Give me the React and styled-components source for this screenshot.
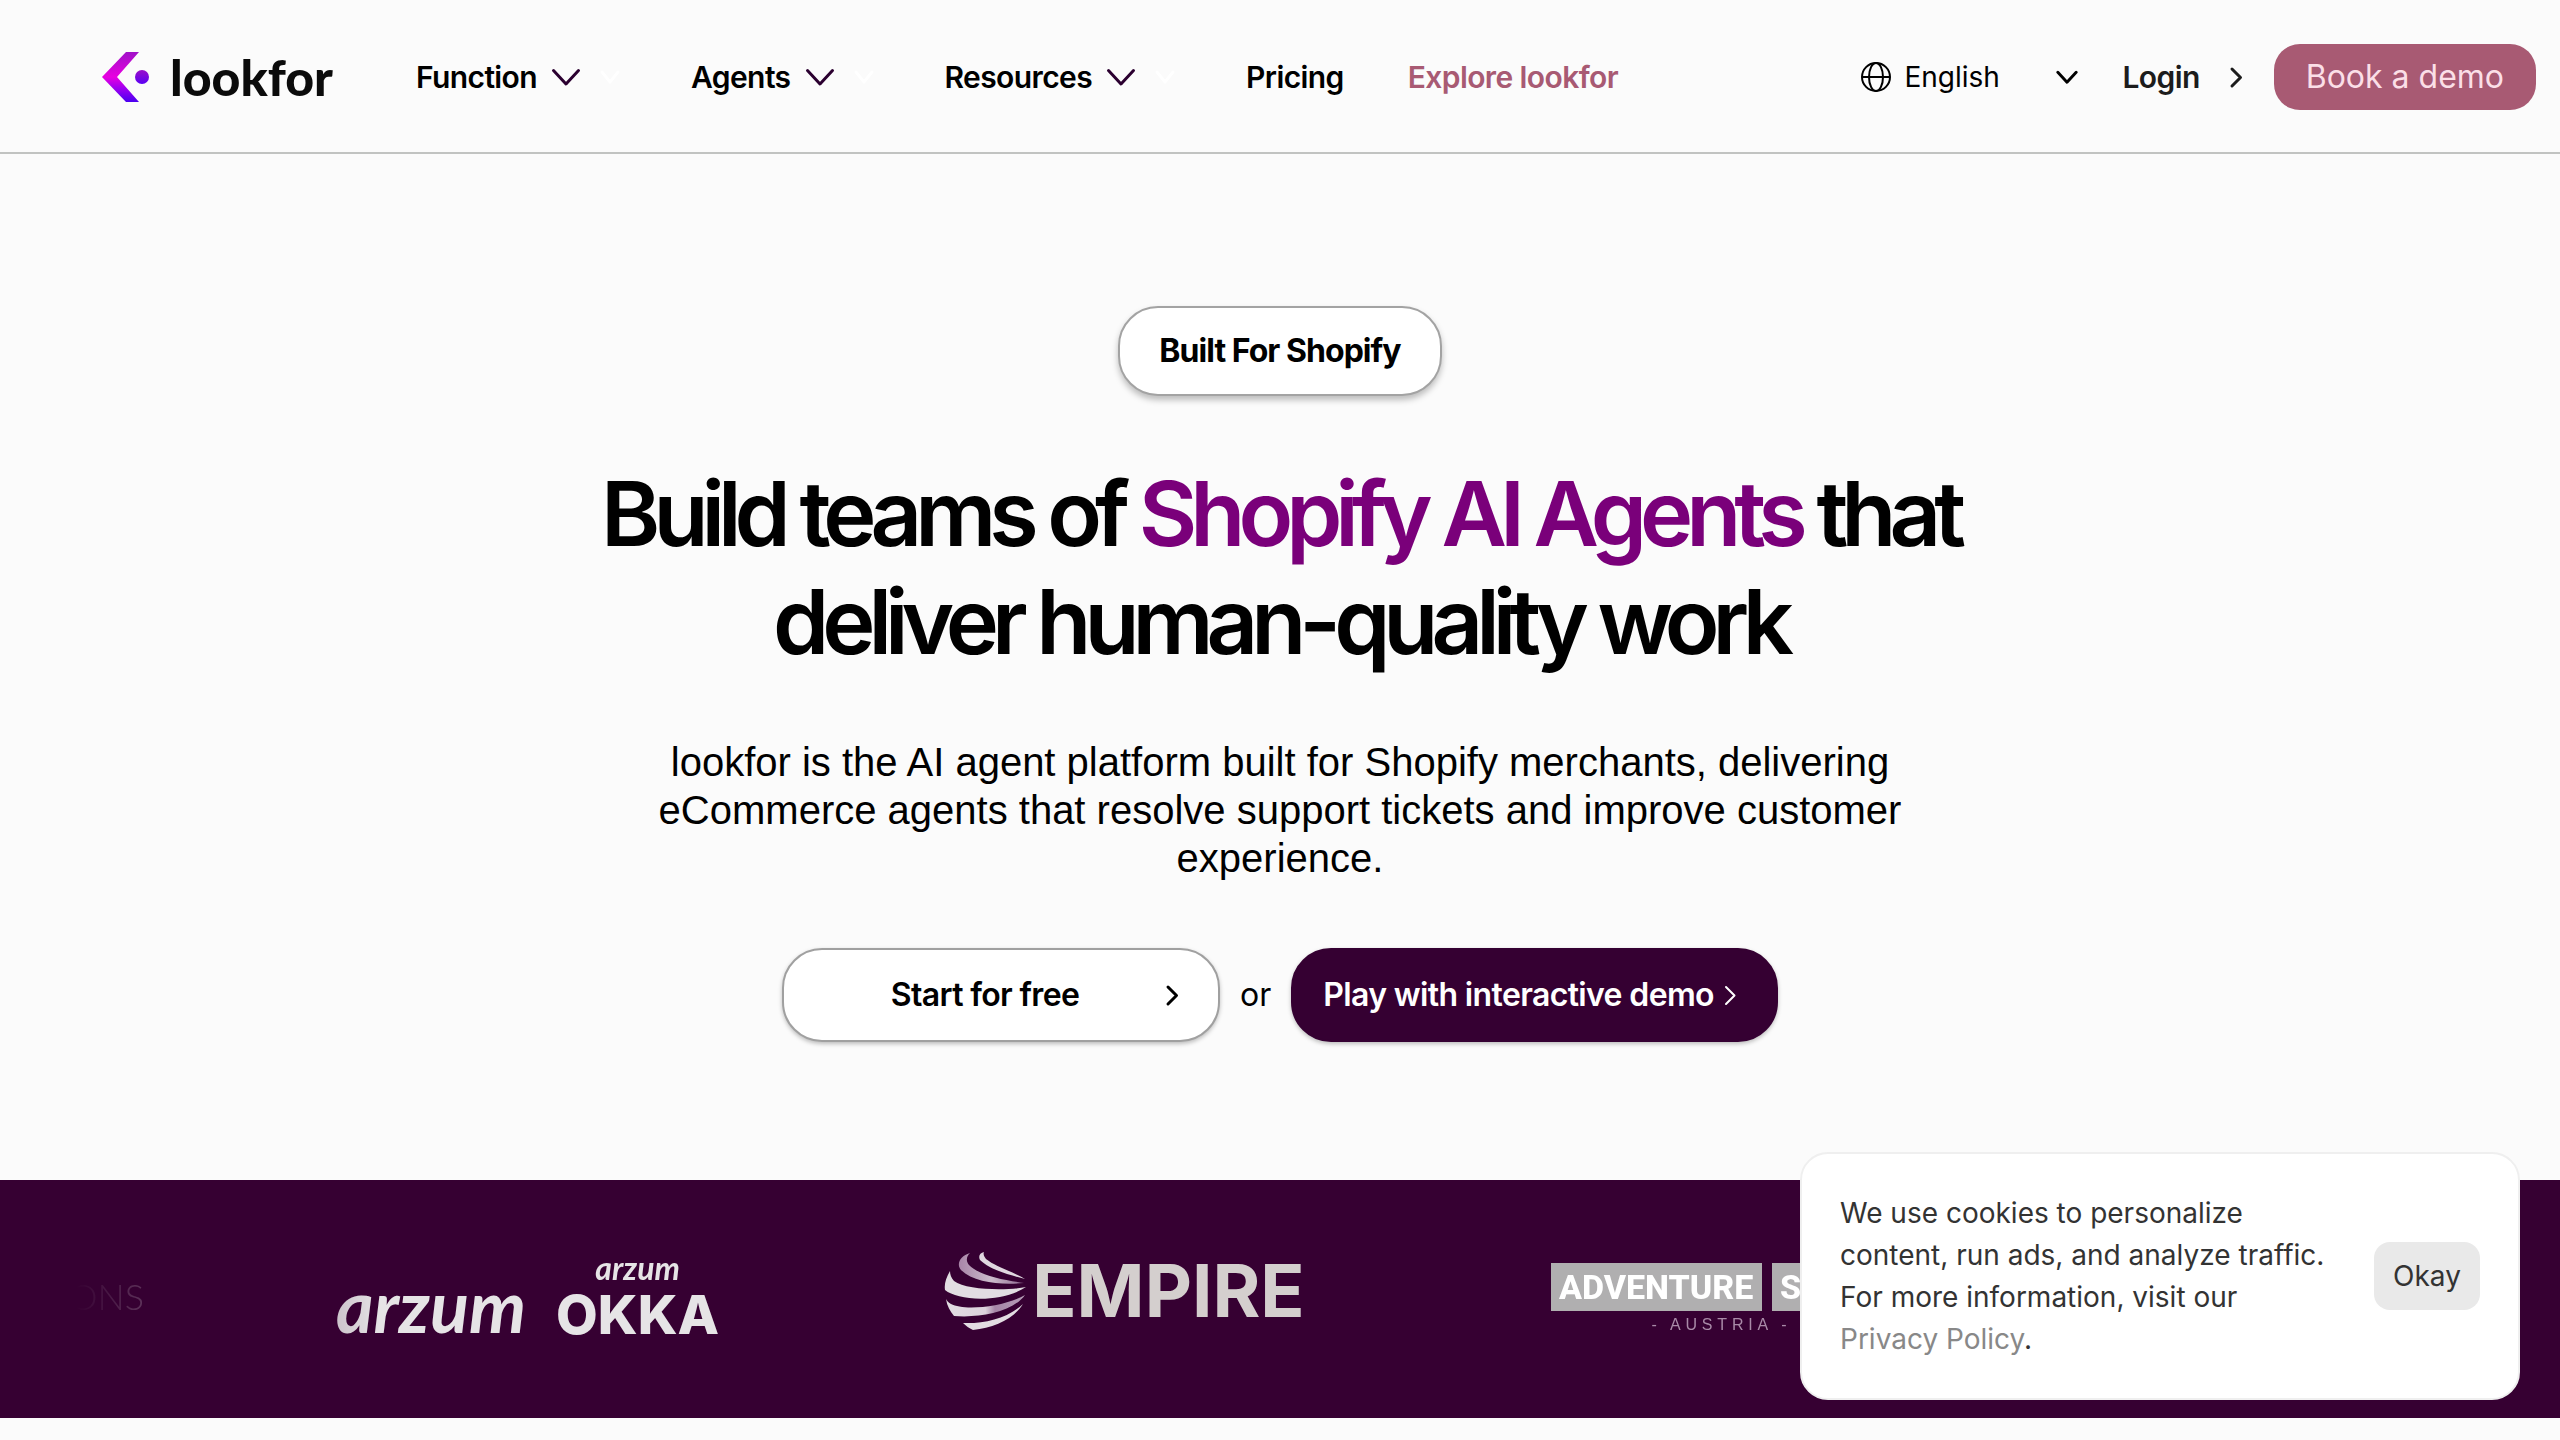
import React from "react";
import styled, { createGlobalStyle } from "styled-components";

const GlobalStyle = createGlobalStyle`
  *, *::before, *::after { box-sizing: border-box; }
  body {
    margin: 0;
    background: #fbfbfb;
    color: #000;
    font-family: Inter, "Liberation Sans", sans-serif;
    overflow-x: hidden;
  }
  button, select { font: inherit; color: inherit; }
  a { color: inherit; text-decoration: none; }
`;

const Header = styled.header`
  display: flex;
  align-items: center;
  justify-content: space-between;
  height: 154px;
  padding: 2px 24px 0 100px;
  border-bottom: 2px solid #c1c3c1;
`;

const Brand = styled.a`
  display: flex;
  align-items: center;
  gap: 20px;
  margin-right: 83px;
  font-family: Lato, sans-serif;
  font-size: 50px;
  line-height: 56px;
  font-weight: 900;
  color: #0b0b0b;
`;

const HeaderGroup = styled.div`
  display: flex;
  align-items: center;
`;

const Nav = styled.nav`
  display: flex;
  align-items: center;
  gap: 64px;
`;

const NavButton = styled.button`
  display: flex;
  align-items: center;
  gap: 14px;
  padding: 0 6px 0 0;
  border: 0;
  background: none;
  font-size: 30px;
  line-height: 36px;
  font-weight: 600;
  letter-spacing: -0.02em;
  cursor: pointer;
`;

const NavLink = styled.a`
  font-size: 30px;
  line-height: 36px;
  font-weight: 600;
  letter-spacing: -0.02em;
  color: ${(p) => p.$color || "#000"};
`;

const Language = styled.label`
  display: flex;
  align-items: center;
  gap: 12px;
  margin-right: 44px;
`;

const LanguageSelect = styled.select`
  appearance: none;
  width: 152px;
  padding: 0;
  border: 0;
  background: none;
  font-size: 28px;
  line-height: 36px;
`;

const Login = styled.a`
  display: flex;
  align-items: center;
  gap: 24px;
  margin-right: 26px;
  font-size: 30px;
  line-height: 36px;
  font-weight: 600;
  letter-spacing: -0.02em;
  color: #1c1c1c;
`;

const DemoButton = styled.button`
  height: 66px;
  padding: 0 32px;
  border: 0;
  border-radius: 26px;
  background: #a85a73;
  color: #fbdfe7;
  font-size: 32px;
  line-height: 40px;
  cursor: pointer;
`;

const Hero = styled.main`
  display: flex;
  flex-direction: column;
  align-items: center;
  padding: 152px 40px 138px;
  text-align: center;
`;

const Badge = styled.div`
  display: flex;
  align-items: center;
  height: 90px;
  padding: 0 39px;
  border: 2px solid #a3a3a3;
  border-radius: 40px;
  background: #fff;
  box-shadow: 0 4px 6px rgba(0, 0, 0, 0.25);
  font-size: 32px;
  line-height: 40px;
  font-weight: 700;
  letter-spacing: -0.03em;
`;

const Title = styled.h1`
  max-width: 1440px;
  margin: 64px 0 0;
  font-size: 90px;
  line-height: 108px;
  font-weight: 600;
  letter-spacing: -7px;
`;

const Accent = styled.span`
  color: #7a007a;
`;

const Lead = styled.p`
  max-width: 1280px;
  margin: 62px 0 0;
  font-family: "Liberation Sans", Arial, sans-serif;
  font-size: 40px;
  line-height: 48px;
`;

const Actions = styled.div`
  display: flex;
  align-items: center;
  gap: 20px;
  margin-top: 66px;
  font-size: 32px;
  line-height: 40px;
`;

const ActionButton = styled.button`
  display: flex;
  align-items: center;
  gap: 4px;
  min-width: ${(p) => (p.$dark ? "0" : "438px")};
  height: 94px;
  padding: 0 34px 0 30px;
  border: 2px solid ${(p) => (p.$dark ? "#350032" : "#a0a0a0")};
  border-radius: 40px;
  background: ${(p) => (p.$dark ? "#350032" : "#fff")};
  color: ${(p) => (p.$dark ? "#fff" : "#000")};
  box-shadow: 0 2px 4px rgba(0, 0, 0, 0.25);
  font-weight: 600;
  letter-spacing: -0.02em;
  cursor: pointer;
`;

const ActionLabel = styled.span`
  flex: 1;
  white-space: nowrap;
`;

const Band = styled.section`
  height: 238px;
  overflow: hidden;
  background: #360032;
`;

const Track = styled.div`
  display: flex;
  align-items: center;
  height: 100%;
  mask-image: linear-gradient(to right, transparent 76px, #000 380px);
`;

const Slot = styled.div`
  flex: none;
  display: flex;
  align-items: center;
  justify-content: center;
  width: 597px;
  height: 100%;
  padding-bottom: ${(p) => p.$lift || "0"};
  color: ${(p) => p.$color || "#e6e4e6"};
`;

const LeadingSlot = styled(Slot)`
  justify-content: flex-end;
  width: 229px;
  padding-right: 85px;
`;

const ThinMark = styled.span`
  font-family: Lato, sans-serif;
  font-size: 36px;
  line-height: 40px;
  font-weight: 300;
`;

const ScriptMark = styled.span`
  font-family: Lato, sans-serif;
  font-style: italic;
  font-weight: 700;
  font-size: ${(p) => (p.$small ? "32px" : "72px")};
  line-height: ${(p) => (p.$small ? "38px" : "76px")};
`;

const ArzumPair = styled.div`
  display: flex;
  align-items: flex-end;
  gap: 30px;
`;

const OkkaStack = styled.div`
  display: flex;
  flex-direction: column;
  align-items: center;
`;

const OkkaMark = styled.span`
  font-size: 54px;
  line-height: 56px;
  font-weight: 800;
`;

const EmpireMark = styled.div`
  display: flex;
  align-items: center;
  gap: 4px;
  font-size: 73px;
  line-height: 80px;
  font-weight: 700;
`;

const AdventureMark = styled.div`
  display: flex;
  flex-direction: column;
  align-items: center;
  gap: 4px;
`;

const Plates = styled.div`
  display: flex;
  gap: 10px;
`;

const Plate = styled.span`
  display: flex;
  align-items: center;
  width: ${(p) => p.$width};
  height: 48px;
  padding: 0 8px;
  background: #b0afb0;
  color: #fff;
  font-family: Roboto, "Liberation Sans", sans-serif;
  font-size: 34px;
  line-height: 48px;
  font-weight: 800;
`;

const Country = styled.span`
  font-family: "Liberation Sans", sans-serif;
  font-size: 16px;
  line-height: 20px;
  letter-spacing: 0.3em;
  color: #a98aa8;
`;

const CookieNotice = styled.aside`
  position: fixed;
  right: 40px;
  bottom: 40px;
  display: flex;
  align-items: center;
  gap: 40px;
  width: 720px;
  padding: 38px;
  border: 2px solid #efefef;
  border-radius: 28px;
  background: #fff;
  color: #333;
  font-size: 28px;
  line-height: 42px;
`;

const CookieText = styled.p`
  flex: 1;
  margin: 0;
`;

const PolicyLink = styled.a`
  color: #888;
`;

const OkayButton = styled.button`
  width: 106px;
  height: 68px;
  padding: 0;
  border: 0;
  border-radius: 16px;
  background: #e9e9e9;
  cursor: pointer;
`;

const LookforIcon = () => (
  <svg width="50" height="52" viewBox="0 0 50 52" aria-hidden="true">
    <defs>
      <linearGradient id="lf" x1="0.8" y1="0" x2="0.8" y2="1">
        <stop offset="0" stopColor="#a012c8" />
        <stop offset="0.5" stopColor="#e800e0" />
        <stop offset="0.72" stopColor="#a000f0" />
        <stop offset="1" stopColor="#4a00f0" />
      </linearGradient>
      <linearGradient id="dot" x1="0" y1="0" x2="0" y2="1">
        <stop offset="0" stopColor="#9a10c8" />
        <stop offset="1" stopColor="#5a00f4" />
      </linearGradient>
    </defs>
    <path d="M26 1h13L17 26l22 25H26L2 26z" fill="url(#lf)" />
    <circle cx="42" cy="26" r="7" fill="url(#dot)" />
  </svg>
);

const Chevron = ({ size = 30, color = "#2b0030", stroke = 3 }) => (
  <svg width={size} height={size} viewBox="0 0 30 30" fill="none" stroke={color}
    strokeWidth={stroke} strokeLinecap="round" strokeLinejoin="round" aria-hidden="true">
    <path d="M2.500 8.500L15 22L27.500 8.500" />
  </svg>
);

const GhostChevron = () => (
  <svg width="26" height="30" viewBox="0 0 26 30" fill="none" stroke="#fff"
    strokeWidth="3" strokeLinecap="round" strokeLinejoin="round" aria-hidden="true">
    <path d="M7 10l8 10 8-10" />
  </svg>
);

const Arrow = ({ stroke = 3 }) => (
  <svg width="24" height="24" viewBox="0 0 24 24" fill="none" stroke="currentColor"
    strokeWidth={stroke} strokeLinecap="round" strokeLinejoin="round" aria-hidden="true">
    <path d="M8 4l8.500 8.500L8 21" />
  </svg>
);

const Globe = () => (
  <svg width="32" height="32" viewBox="0 0 32 32" fill="none" stroke="#000" strokeWidth="2" aria-hidden="true">
    <circle cx="16" cy="16" r="14" />
    <ellipse cx="16" cy="16" rx="7" ry="14" />
    <path d="M2 16h28" />
  </svg>
);

const EmpireGlobe = () => (
  <svg width="84" height="80" viewBox="0 0 84 80" aria-hidden="true">
    <defs>
      <linearGradient id="eg1" x1="0" y1="0" x2="1" y2="0">
        <stop offset="0" stopColor="#a884a8" />
        <stop offset="0.5" stopColor="#cbbccb" />
        <stop offset="1" stopColor="#8e6690" />
      </linearGradient>
      <linearGradient id="eg2" x1="0" y1="0" x2="1" y2="0">
        <stop offset="0" stopColor="#e2dde2" />
        <stop offset="0.5" stopColor="#dcd2dc" />
        <stop offset="0.62" stopColor="#a585a6" />
        <stop offset="1" stopColor="#b79fb8" />
      </linearGradient>
    </defs>
    <path d="M40 1C36 2 34 5 36 9C46 19 66 24 81 28C70 21 52 16 42 8C40 5 39 3 40 1z" fill="#e0d8e0" />
    <path d="M26 2C16 5 12 13 17 19C30 32 58 34 80 32C60 29 36 25 25 14C22 10 22 6 26 2z" fill="url(#eg1)" />
    <path d="M6 20C2 27 0 33 1 39C14 50 58 52 82 36C62 40 22 39 10 30C7 27 6 23 6 20z" fill="#e2dde2" />
    <path d="M2 48C3 55 6 60 10 65C34 67 68 62 81 44C60 56 20 60 7 53C4 51 3 50 2 48z" fill="url(#eg2)" />
    <path d="M19 72C22 75 25 77 29 79C50 77 70 68 79 53C64 67 40 73 19 72z" fill="#e2dde2" />
  </svg>
);

const menus = ["Function", "Agents", "Resources"];

export default function App() {
  return (
    <>
      <GlobalStyle />
      <Header>
        <HeaderGroup>
          <Brand href="#home"><LookforIcon />lookfor</Brand>
          <Nav>
            {menus.map((name) => (
              <NavButton key={name} type="button">
                {name}
                <Chevron />
                <GhostChevron />
              </NavButton>
            ))}
            <NavLink href="#pricing">Pricing</NavLink>
            <NavLink href="#explore" $color="#a85a73">Explore lookfor</NavLink>
          </Nav>
        </HeaderGroup>
        <HeaderGroup>
          <Language>
            <Globe />
            <HeaderGroup>
              <LanguageSelect aria-label="Language" defaultValue="English">
                <option>English</option>
              </LanguageSelect>
              <Chevron size={22} color="#000" stroke={4} />
            </HeaderGroup>
          </Language>
          <Login href="#login">Login<Arrow /></Login>
          <DemoButton type="button">Book a demo</DemoButton>
        </HeaderGroup>
      </Header>

      <Hero>
        <Badge>Built For Shopify</Badge>
        <Title>Build teams of <Accent>Shopify AI Agents</Accent> that deliver human-quality work</Title>
        <Lead>
          lookfor is the AI agent platform built for Shopify merchants, delivering eCommerce
          agents that resolve support tickets and improve customer experience.
        </Lead>
        <Actions>
          <ActionButton type="button"><ActionLabel>Start for free</ActionLabel><Arrow /></ActionButton>
          <span>or</span>
          <ActionButton type="button" $dark><ActionLabel>Play with interactive demo</ActionLabel><Arrow stroke={2} /></ActionButton>
        </Actions>
      </Hero>

      <Band>
        <Track>
          <LeadingSlot $lift="6px"><ThinMark>ONS</ThinMark></LeadingSlot>
          <Slot $lift="6px">
            <ArzumPair>
              <ScriptMark>arzum</ScriptMark>
              <OkkaStack>
                <ScriptMark $small>arzum</ScriptMark>
                <OkkaMark>OKKA</OkkaMark>
              </OkkaStack>
            </ArzumPair>
          </Slot>
          <Slot $lift="16px" $color="#d4cfce">
            <EmpireMark><EmpireGlobe />EMPIRE</EmpireMark>
          </Slot>
          <Slot>
            <AdventureMark>
              <Plates>
                <Plate $width="211px">ADVENTURE</Plate>
                <Plate $width="120px">S</Plate>
              </Plates>
              <Country>- AUSTRIA -</Country>
            </AdventureMark>
          </Slot>
        </Track>
      </Band>

      <CookieNotice aria-label="Cookie notice">
        <CookieText>
          We use cookies to personalize content, run ads, and analyze traffic. For more
          information, visit our <PolicyLink href="#privacy">Privacy Policy</PolicyLink>.
        </CookieText>
        <OkayButton type="button">Okay</OkayButton>
      </CookieNotice>
    </>
  );
}
